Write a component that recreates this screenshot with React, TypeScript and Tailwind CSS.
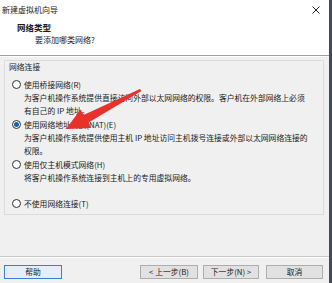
import React from "react";

const options = [
  {
    label: "使用桥接网络(R)",
    checked: false,
    desc: [
      "为客户机操作系统提供直接访问外部以太网网络的权限。客户机在外部网络上必须",
      "有自己的 IP 地址。",
    ],
    gap: "mt-[5px]",
  },
  {
    label: "使用网络地址转换(NAT)(E)",
    checked: true,
    desc: [
      "为客户机操作系统提供使用主机 IP 地址访问主机拨号连接或外部以太网网络连接的",
      "权限。",
    ],
    gap: "mt-[1px]",
  },
  {
    label: "使用仅主机模式网络(H)",
    checked: false,
    desc: ["将客户机操作系统连接到主机上的专用虚拟网络。"],
    gap: "mt-[1px]",
  },
  {
    label: "不使用网络连接(T)",
    checked: false,
    desc: [],
    gap: "mt-[13px]",
  },
];

const Radio = ({ checked }: { checked: boolean }) => (
  <span className="w-[9px] h-[9px] rounded-full border border-[#333] bg-white flex items-center justify-center shrink-0">
    {checked && <span className="w-[5px] h-[5px] rounded-full bg-[#1a5fb4]" />}
  </span>
);

export default function App() {
  return (
    <div
      className="relative w-[332px] h-[283px] flex bg-[#f0f0f0] overflow-hidden text-[#1a1a1a]"
      style={{ fontFamily: '"Noto Sans CJK SC", "Noto Sans", sans-serif' }}
    >
      <div className="w-[329px] flex flex-col">
        {/* title + header */}
        <div className="bg-white h-[55px] flex flex-col">
          <div className="h-[19px] flex items-center justify-between pl-[2px] pr-[9px] text-[8px] leading-[12px]">
            <span>新建虚拟机向导</span>
            <svg width="8" height="8" viewBox="0 0 8 8">
              <path d="M0.5 0.5 L7.5 7.5 M7.5 0.5 L0.5 7.5" stroke="#222" strokeWidth="1" />
            </svg>
          </div>
          <div className="pl-[17px] mt-[2px] font-bold text-[8.5px] leading-[12px]">网络类型</div>
          <div className="pl-[35px] mt-[1px] text-[8px] leading-[12px]">要添加哪类网络?</div>
        </div>
        <div className="h-px bg-[#a0a0a0]" />
        <div className="h-px bg-white" />

        {/* body */}
        <div className="flex-1 flex flex-col px-[4px]">
          <div className="mt-[3px] h-[155px] w-[320px] border border-[#dcdcdc] pl-[4px] text-[7.8px] leading-[13px]">
            <div className="leading-[12px]">网络连接</div>
            {options.map((o, i) => (
              <div key={i} className={o.gap}>
                <div className="flex items-center gap-[3px] pl-[3px]">
                  <Radio checked={o.checked} />
                  <span>{o.label}</span>
                </div>
                {o.desc.map((d, j) => (
                  <div key={j} className="pl-[15px] whitespace-nowrap">
                    {d}
                  </div>
                ))}
              </div>
            ))}
          </div>

          <div className="mt-[41px] h-px bg-[#c8c8c8] -mx-[4px]" />
          <div className="h-px bg-white -mx-[4px]" />

          <div className="mt-[7px] flex items-center text-[7.8px] leading-[12px]">
            <button className="w-[58px] h-[14px] border border-[#3c7fd1] bg-[#e5eef8] flex items-center justify-center">
              帮助
            </button>
            <button className="ml-[78px] w-[58px] h-[14px] border border-[#adadad] bg-[#e1e1e1] flex items-center justify-center">
              &lt; 上一步(B)
            </button>
            <button className="ml-[5px] w-[56px] h-[14px] border border-[#adadad] bg-[#e1e1e1] flex items-center justify-center">
              下一步(N) &gt;
            </button>
            <button className="ml-[7px] w-[57px] h-[14px] border border-[#adadad] bg-[#e1e1e1] flex items-center justify-center">
              取消
            </button>
          </div>
        </div>
      </div>
      <div className="w-[3px] bg-[#3d4c62]" />

      {/* red annotation arrow */}
      <svg className="absolute left-0 top-0 pointer-events-none" width="332" height="283">
        <polygon
          points="140,89 141.5,91 88.5,122.5 91,128 66,129 80.5,109.5 83.5,115"
          fill="#e8312b"
        />
      </svg>
    </div>
  );
}
